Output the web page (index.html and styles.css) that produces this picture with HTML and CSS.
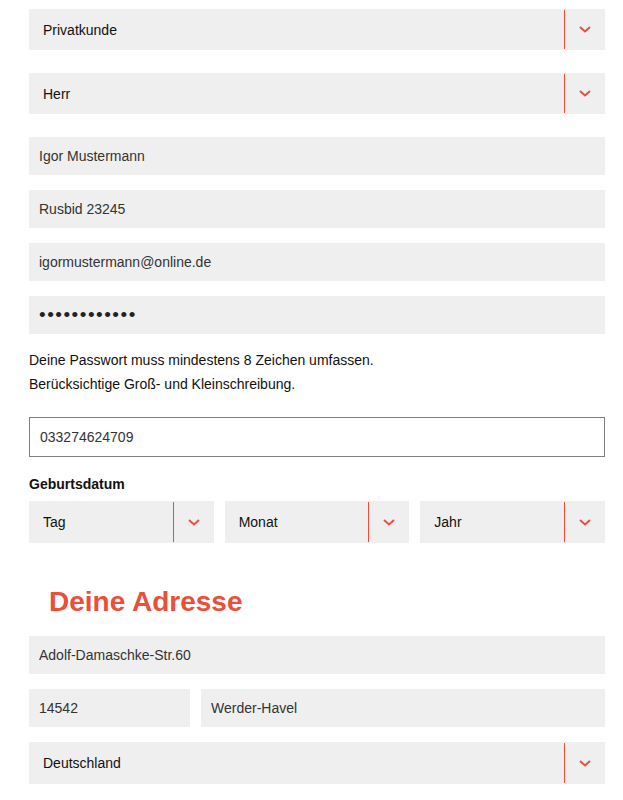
FILE: index.html
```html
<!DOCTYPE html>
<html lang="de">
<head>
  <meta charset="UTF-8" />
  <meta name="viewport" content="width=device-width, initial-scale=1.0"/>
  <title>Registrierung</title>
  <link rel="stylesheet" href="styles.css">
</head>
<body>

  <form class="reg-form">

    <!-- Kundentyp / Anrede -->
    <div class="select-box top">
      <select><option>Privatkunde</option></select>
      <span class="arrow"><svg width="12" height="7" viewBox="0 0 12 7"><path d="M1 1l5 4.5L11 1" fill="none" stroke="#e8503a" stroke-width="2"/></svg></span>
    </div>
    <div class="select-box top">
      <select><option>Herr</option></select>
      <span class="arrow"><svg width="12" height="7" viewBox="0 0 12 7"><path d="M1 1l5 4.5L11 1" fill="none" stroke="#e8503a" stroke-width="2"/></svg></span>
    </div>

    <input class="field" type="text" value="Igor Mustermann">
    <input class="field" type="text" value="Rusbid 23245">
    <input class="field" type="email" value="igormustermann@online.de">
    <input class="field" type="password" value="passwort1234">

    <p class="hint">Deine Passwort muss mindestens 8 Zeichen umfassen.<br>Berücksichtige Groß- und Kleinschreibung.</p>

    <input class="field phone" type="tel" value="033274624709">

    <!-- Geburtsdatum -->
    <label class="label">Geburtsdatum</label>
    <div class="date-row">
      <div class="select-box">
        <select><option>Tag</option></select>
        <span class="arrow"><svg width="12" height="7" viewBox="0 0 12 7"><path d="M1 1l5 4.5L11 1" fill="none" stroke="#e8503a" stroke-width="2"/></svg></span>
      </div>
      <div class="select-box">
        <select><option>Monat</option></select>
        <span class="arrow"><svg width="12" height="7" viewBox="0 0 12 7"><path d="M1 1l5 4.5L11 1" fill="none" stroke="#e8503a" stroke-width="2"/></svg></span>
      </div>
      <div class="select-box">
        <select><option>Jahr</option></select>
        <span class="arrow"><svg width="12" height="7" viewBox="0 0 12 7"><path d="M1 1l5 4.5L11 1" fill="none" stroke="#e8503a" stroke-width="2"/></svg></span>
      </div>
    </div>

    <h2 class="section-title">Deine Adresse</h2>

    <input class="field" type="text" value="Adolf-Damaschke-Str.60">
    <div class="city-row">
      <input class="field" type="text" value="14542">
      <input class="field" type="text" value="Werder-Havel">
    </div>
    <div class="select-box">
      <select><option>Deutschland</option></select>
      <span class="arrow"><svg width="12" height="7" viewBox="0 0 12 7"><path d="M1 1l5 4.5L11 1" fill="none" stroke="#e8503a" stroke-width="2"/></svg></span>
    </div>

  </form>

</body>
</html>
```
FILE: styles.css
```css
body {
  margin: 0;
  font-family: "Liberation Sans", Arial, sans-serif;
  font-size: 14px;
  color: #111;
  background: #fff;
}
.reg-form {
  width: 576px;
  margin: 9px 0 0 29px;
  display: flex;
  flex-direction: column;
}
.select-box {
  position: relative;
  height: 42px;
  background: #efefef;
}
.select-box.top {
  height: 41px;
  margin-bottom: 23px;
}
.select-box select {
  appearance: none;
  -webkit-appearance: none;
  width: 100%;
  height: 100%;
  border: 0;
  outline: 0;
  background: transparent;
  padding: 0 50px 0 14px;
  font-family: "Liberation Sans", Arial, sans-serif;
  font-size: 14px;
  color: #111;
}
.select-box .arrow {
  position: absolute;
  top: 1px;
  bottom: 1px;
  right: 0;
  width: 40px;
  border-left: 1px solid #e8503a;
  display: flex;
  align-items: center;
  justify-content: center;
  pointer-events: none;
}
.field {
  box-sizing: border-box;
  width: 100%;
  height: 38px;
  margin: 0 0 15px;
  padding: 0 10px;
  border: 0;
  outline: 0;
  background: #efefef;
  font-family: "Liberation Sans", Arial, sans-serif;
  font-size: 14px;
  color: #333;
}
.field[type="password"] {
  font-size: 19px;
  letter-spacing: 1.5px;
  color: #222;
}
.hint {
  margin: -1px 0 21px;
  line-height: 24px;
  color: #111;
}
.field.phone {
  height: 40px;
  margin-bottom: 17px;
  background: #fff;
  border: 1px solid #808080;
}
.label {
  font-weight: bold;
  line-height: 20px;
  margin-bottom: 7px;
}
.date-row {
  display: grid;
  grid-template-columns: 1fr 1fr 1fr;
  gap: 11px;
}
.section-title {
  margin: 42px 0 17px 20px;
  font-size: 28px;
  line-height: 34px;
  color: #e8503a;
}
.city-row {
  display: grid;
  grid-template-columns: 161px 1fr;
  gap: 11px;
}
```
